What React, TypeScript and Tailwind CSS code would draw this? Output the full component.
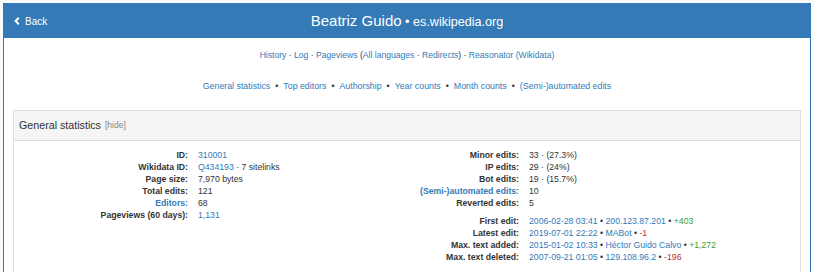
const LEFT_ROWS = [
  { label: "ID:", value: <a className="text-[#337ab7]">310001</a> },
  {
    label: "Wikidata ID:",
    value: (
      <>
        <a className="text-[#337ab7]">Q434193</a> · 7 sitelinks
      </>
    ),
  },
  { label: "Page size:", value: "7,970 bytes" },
  { label: "Total edits:", value: "121" },
  { label: "Editors:", value: "68", link: true },
  { label: "Pageviews (60 days):", value: <a className="text-[#337ab7]">1,131</a> },
];

const RIGHT_ROWS = [
  { label: "Minor edits:", value: "33 · (27.3%)" },
  { label: "IP edits:", value: "29 · (24%)" },
  { label: "Bot edits:", value: "19 · (15.7%)" },
  { label: "(Semi-)automated edits:", value: "10", link: true },
  { label: "Reverted edits:", value: "5" },
];

const EDIT_ROWS = [
  { label: "First edit:", date: "2006-02-28 03:41", user: "200.123.87.201", diff: "+403" },
  { label: "Latest edit:", date: "2019-07-01 22:22", user: "MABot", diff: "-1" },
  { label: "Max. text added:", date: "2015-01-02 10:33", user: "Héctor Guido Calvo", diff: "+1,272" },
  { label: "Max. text deleted:", date: "2007-09-21 01:05", user: "129.108.96.2", diff: "-196" },
];

const SECTIONS = [
  "General statistics",
  "Top editors",
  "Authorship",
  "Year counts",
  "Month counts",
  "(Semi-)automated edits",
];

function Row({ label, link, children, labelW }: { label: string; link?: boolean; children: React.ReactNode; labelW: string }) {
  return (
    <div className="flex h-[12px] items-center leading-[12px]">
      <div className={`${labelW} flex shrink-0 justify-end whitespace-nowrap font-bold ${link ? "text-[#337ab7]" : "text-[#333]"}`}>
        {label}
      </div>
      <div className="pl-[10px] whitespace-nowrap text-[#333]">{children}</div>
    </div>
  );
}

export default function App() {
  return (
    <div className="min-h-[272px] bg-[#fafafa] pt-[3px] font-['Liberation_Sans',Arial,sans-serif] text-[#333]">
      <div className="mx-[3px] h-[269px] overflow-hidden border border-b-0 border-[#337ab7] bg-white">
        {/* cabeçalho azul */}
        <div className="grid h-[34px] grid-cols-[1fr_auto_1fr] items-center bg-[#337ab7] text-white">
          <a className="flex items-center gap-[5px] pl-[10px] text-[10px]">
            <svg width="6" height="8" viewBox="0 0 6 8" aria-hidden>
              <path d="M4.8 0.8 L1.6 4 L4.8 7.2" fill="none" stroke="white" strokeWidth="2" />
            </svg>
            Back
          </a>
          <div className="whitespace-nowrap">
            <span className="text-[15px]">Beatriz Guido</span>
            <span className="text-[12.6px]"> • es.wikipedia.org</span>
          </div>
          <div />
        </div>

        <div className="pt-[11px] text-center text-[8.6px] leading-[12px]">
          <a className="text-[#337ab7]">History</a> · <a className="text-[#337ab7]">Log</a> ·{" "}
          <a className="text-[#337ab7]">Pageviews</a> (<a className="text-[#337ab7]">All languages</a> ·{" "}
          <a className="text-[#337ab7]">Redirects</a>) · <a className="text-[#337ab7]">Reasonator (Wikidata)</a>
        </div>

        <div className="mt-[19px] flex justify-center gap-[5px] text-[8.8px] leading-[12px]">
          {SECTIONS.map((s, i) => (
            <span key={s} className="flex gap-[5px]">
              {i > 0 && <span>•</span>}
              <a className="text-[#337ab7]">{s}</a>
            </span>
          ))}
        </div>

        {/* painel de estatísticas */}
        <div className="mx-[9px] mt-[18px] h-[200px] border border-[#ddd]">
          <div className="flex h-[30px] items-center gap-[4px] border-b border-[#ddd] bg-[#f5f5f5] pl-[5px]">
            <span className="text-[10.7px]">General statistics</span>
            <span className="text-[8.5px] text-[#888]">[hide]</span>
          </div>

          <div className="flex pt-[8px] text-[8.7px]">
            <div className="ml-[86px] w-[321px]">
              {LEFT_ROWS.map((r) => (
                <Row key={r.label} label={r.label} link={r.link} labelW="w-[88px]">
                  {r.value}
                </Row>
              ))}
            </div>
            <div>
              {RIGHT_ROWS.map((r) => (
                <Row key={r.label} label={r.label} link={r.link} labelW="w-[98px]">
                  {r.value}
                </Row>
              ))}
              <div className="h-[6px]" />
              {EDIT_ROWS.map((r) => (
                <Row key={r.label} label={r.label} labelW="w-[98px]">
                  <a className="text-[#337ab7]">{r.date}</a> • <a className="text-[#337ab7]">{r.user}</a> •{" "}
                  <span className={r.diff.startsWith("+") ? "text-[#3c9a2e]" : "text-[#c12e2a]"}>{r.diff}</span>
                </Row>
              ))}
            </div>
          </div>
        </div>
      </div>
    </div>
  );
}
